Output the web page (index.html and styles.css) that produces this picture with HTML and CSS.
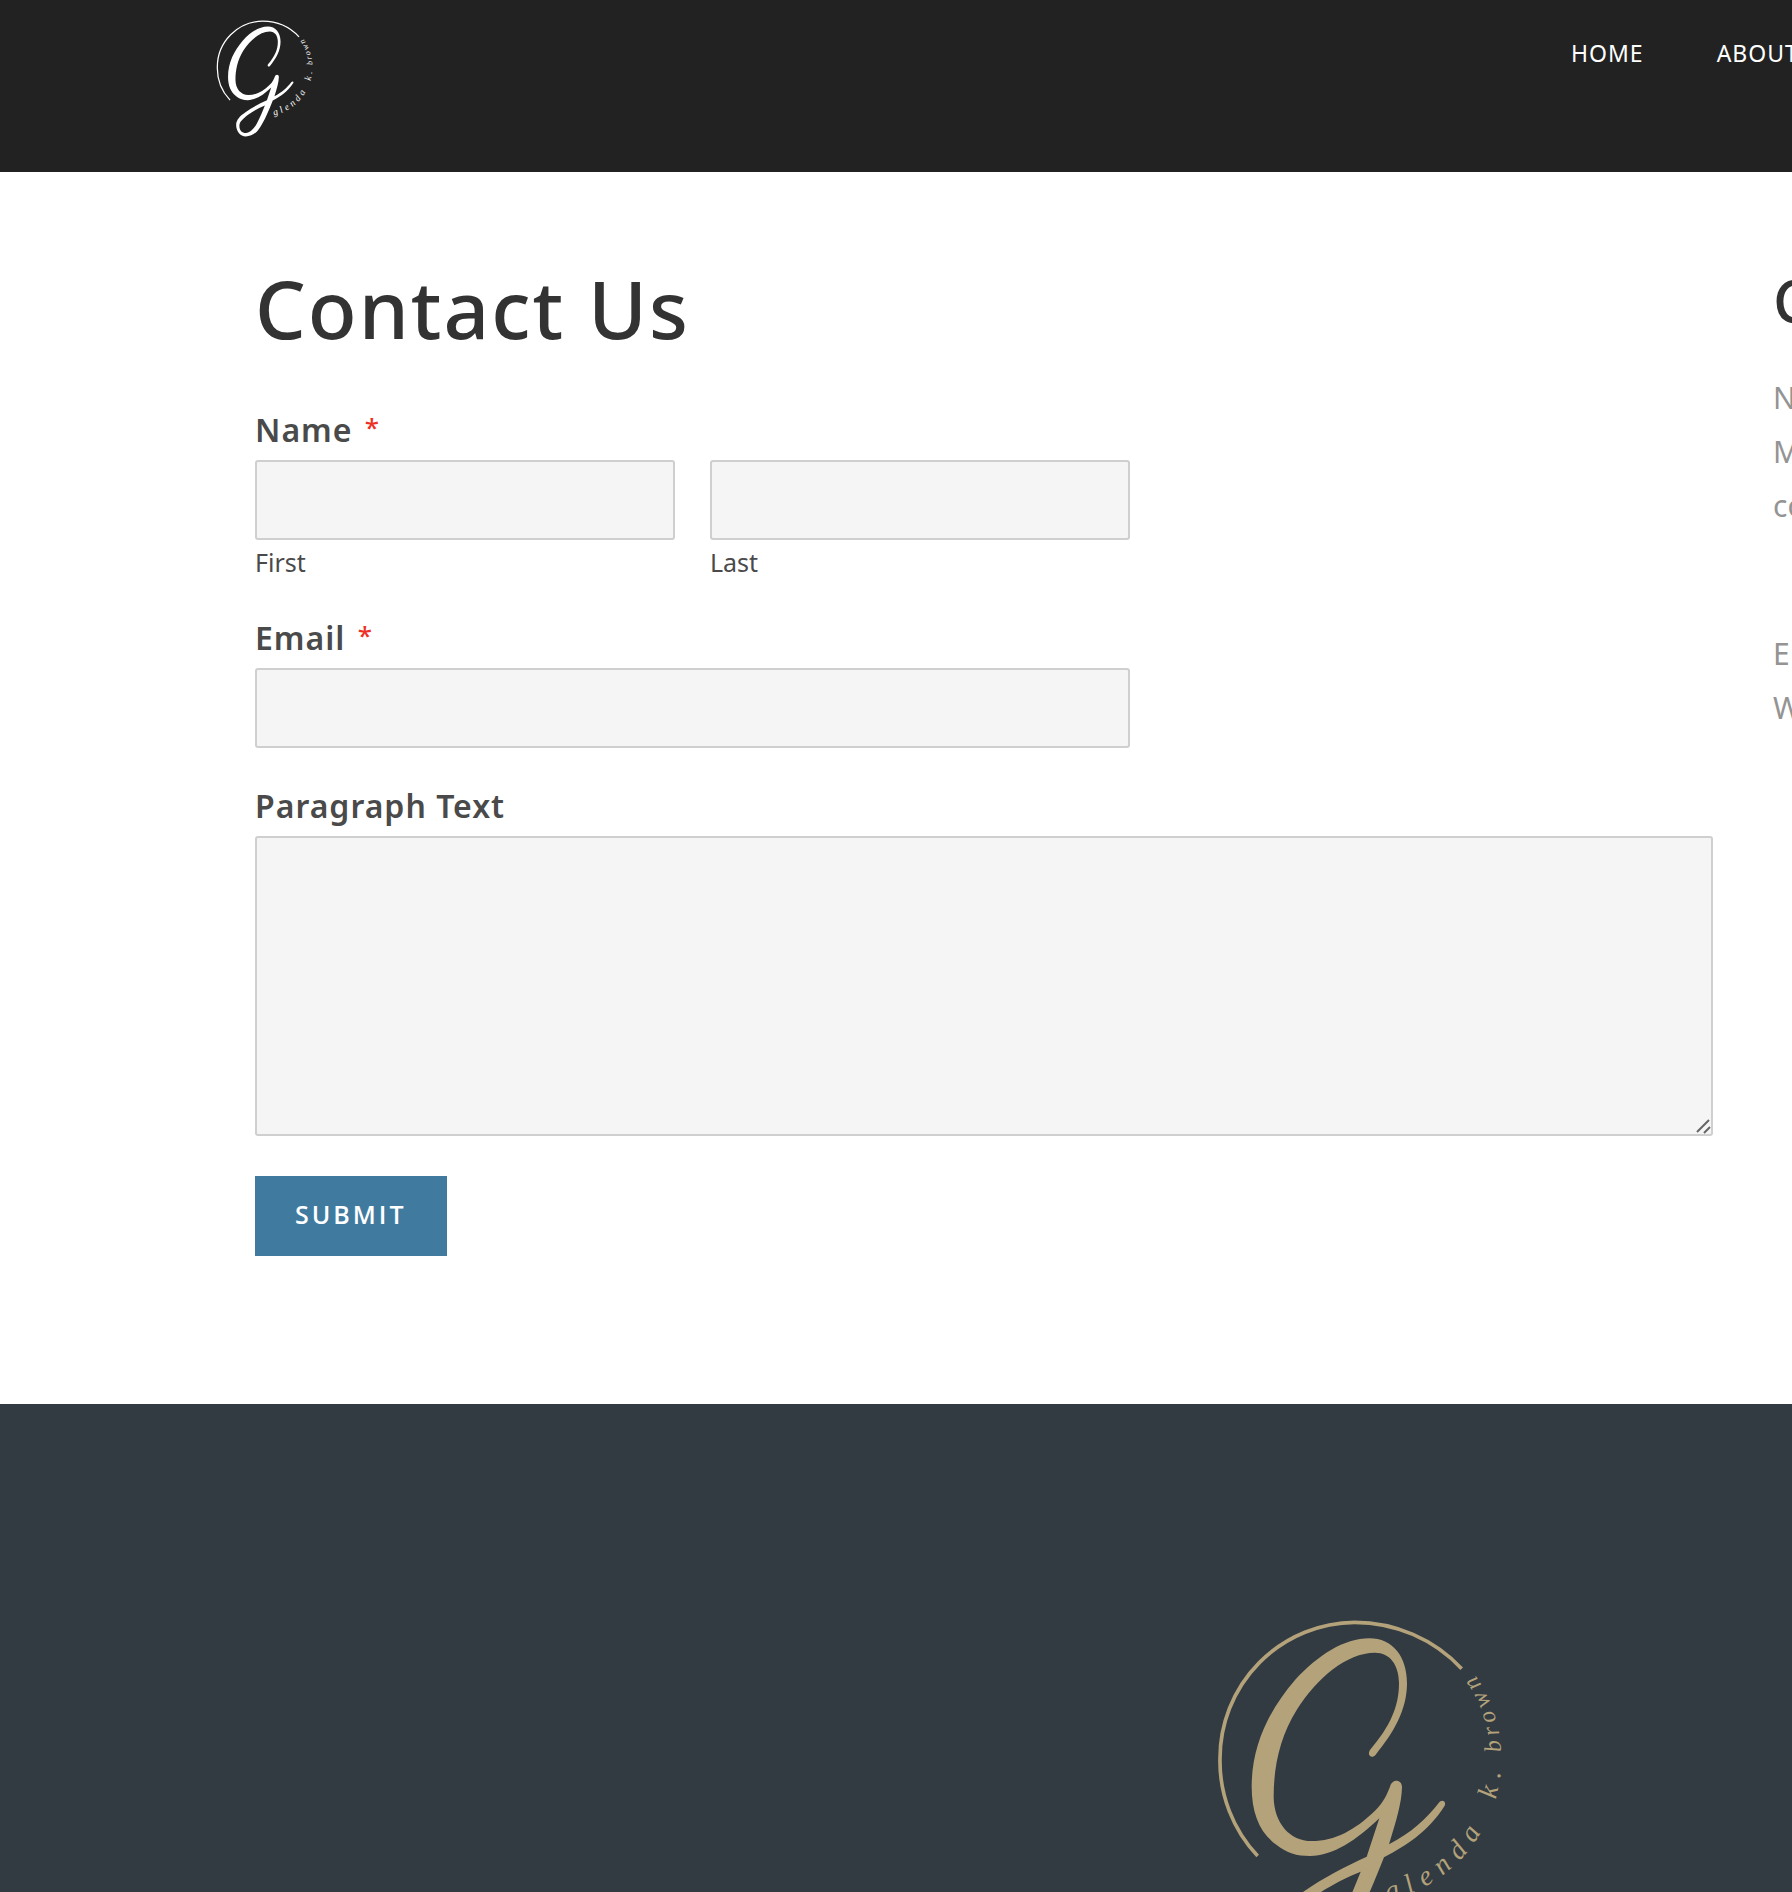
FILE: index.html
```html
<!DOCTYPE html>
<html lang="en">
<head>
<meta charset="utf-8">
<meta name="viewport" content="width=device-width, initial-scale=1">
<title>Contact Us</title>
<link rel="stylesheet" href="styles.css">
</head>
<body>
<svg class="defs" aria-hidden="true">
  <symbol id="logo" viewBox="48 48 870 1056" preserveAspectRatio="xMidYMin slice">
    <path class="logo-ring" d="M173 768A415 415 0 0 1 60 475A408 408 0 0 1 464 67A440 440 0 0 1 785 206"/>
    <path class="logo-mark" fill-rule="evenodd" d="M510 450C570 380 597 320 597 250C597 195 570 158 525 158C440 158 350 235 290 330C240 410 221 500 221 590C222 670 270 723 335 723C405 723 465 690 525 632C552 605 562 580 570 560C576 536 606 536 606 562C605 610 588 665 567 733C635 698 680 655 716 609C725 596 740 604 734 617C685 695 620 735 552 772C517 860 480 950 440 1008C405 1065 360 1090 313 1090C262 1088 227 1045 227 986C227 945 260 908 310 875C370 833 435 800 500 770L538 655C470 720 400 768 330 768C290 768 260 759 230 735C180 700 155 640 155 560C155 435 208 330 285 240C355 165 432 115 508 115C578 115 621 170 621 250C621 330 580 400 527 464C515 478 500 465 510 450ZM482 815C415 842 350 880 315 912C275 948 256 965 256 1000C256 1036 280 1060 313 1060C352 1060 387 1018 412 972C440 920 460 870 482 815Z"/>
    <path id="logo-arc" fill="none" d="M563 902A438 438 0 0 0 809 203"/>
    <text class="logo-name"><textPath href="#logo-arc" startOffset="0">glenda</textPath></text>
    <text class="logo-name"><textPath href="#logo-arc" startOffset="465">k.</textPath></text>
    <text class="logo-name logo-name-last"><textPath href="#logo-arc" startOffset="610">brown</textPath></text>
  </symbol>
</svg>

<header class="site-header">
  <a class="brand" href="#" aria-label="Glenda K. Brown"><svg class="logo logo-small"><use href="#logo"/></svg></a>
  <nav class="nav">
    <a href="#">HOME</a>
    <a href="#">ABOUT</a>
  </nav>
</header>

<main class="content">
  <section class="contact">
    <h1 class="title">Contact Us</h1>
    <form class="form">
      <fieldset class="field">
        <legend class="label">Name <span class="required">*</span></legend>
        <div class="names">
          <div class="name-part">
            <input class="control" id="first" type="text" required>
            <label class="sublabel" for="first">First</label>
          </div>
          <div class="name-part">
            <input class="control" id="last" type="text" required>
            <label class="sublabel" for="last">Last</label>
          </div>
        </div>
      </fieldset>
      <div class="field">
        <label class="label" for="email">Email <span class="required">*</span></label>
        <input class="control medium" id="email" type="email" required>
      </div>
      <div class="field">
        <label class="label" for="message">Paragraph Text</label>
        <textarea class="control message" id="message"></textarea>
      </div>
      <div class="actions"><button class="submit" type="submit">SUBMIT</button></div>
    </form>
  </section>
  <aside class="details">
    <h2 class="subtitle">C</h2>
    <p class="lines">N<br>M<br>co</p>
    <p class="lines lines-web">E<br>W</p>
  </aside>
</main>

<footer class="site-footer">
  <svg class="logo logo-large" role="img" aria-label="Glenda K. Brown"><use href="#logo"/></svg>
</footer>
</body>
</html>
```
FILE: styles.css
```css
* { box-sizing: border-box; }

body {
  margin: 0;
  min-height: 100vh;
  display: flex;
  flex-direction: column;
  overflow-x: hidden;
  background: #fff;
  color: #4a4a4a;
  font-family: "Noto Sans", "Open Sans", sans-serif;
}

.defs { position: absolute; width: 0; height: 0; }

/* Header */
.site-header {
  display: flex;
  justify-content: space-between;
  align-items: flex-start;
  padding: 19px 0 34px 216px;
  background: #222;
  color: #fff;
}
.brand { color: inherit; }
.nav {
  display: flex;
  gap: 73px;
  width: 221px;
  padding-top: 19px;
  overflow: hidden;
}
.nav a {
  color: #fff;
  font-size: 23px;
  line-height: 30px;
  letter-spacing: 1px;
  text-decoration: none;
  white-space: nowrap;
}

/* Logo */
.logo { display: block; fill: currentColor; }
.logo-small { width: 98px; height: 119px; }
.logo-large { width: 290px; height: 276px; }
.logo-ring { fill: none; stroke: currentColor; stroke-width: 11px; }
.logo-name {
  font-family: "Liberation Serif", serif;
  font-style: italic;
  font-size: 84px;
  letter-spacing: 26px;
}
.logo-name-last { font-size: 72px; letter-spacing: 16px; }

/* Contact area */
.content {
  display: grid;
  grid-template-columns: minmax(0, 1fr) 19px;
  gap: 60px;
  padding: 89px 0 148px 255px;
  overflow: hidden;
}
.title,
.subtitle {
  margin: 0;
  color: #333;
  font-weight: 500;
  letter-spacing: 2px;
}
.title { font-size: 80px; line-height: 94px; }
.subtitle { font-size: 60px; line-height: 78px; }

.form {
  display: flex;
  flex-direction: column;
  gap: 38px;
  margin-top: 55px;
}
.field {
  min-width: 0;
  margin: 0;
  padding: 0;
  border: 0;
}
.label {
  display: block;
  margin-bottom: 10px;
  padding: 0;
  font-size: 32px;
  line-height: 40px;
  font-weight: 600;
  letter-spacing: 1px;
}
.required {
  margin-left: 3px;
  color: #ee3124;
  font-size: 26px;
  font-weight: 500;
  line-height: 1;
  vertical-align: 5px;
}
.names {
  display: grid;
  grid-template-columns: 1fr 1fr;
  gap: 35px;
  width: 60%;
}
.control {
  display: block;
  width: 100%;
  height: 80px;
  padding: 0 20px;
  border: 2px solid #cfcfcf;
  border-radius: 3px;
  background: #f5f5f5;
  color: #4a4a4a;
  font: inherit;
  font-size: 30px;
}
.medium { width: 60%; }
.message { height: 300px; padding: 20px; resize: vertical; }
.message::-webkit-resizer {
  background: url("data:image/svg+xml,%3Csvg xmlns='http://www.w3.org/2000/svg' width='15' height='15'%3E%3Cpath d='M1 13L13 1M8 14L14 8' stroke='%23666' stroke-width='2'/%3E%3C/svg%3E") no-repeat;
}
.sublabel {
  display: block;
  margin-top: 7px;
  padding-bottom: 3px;
  font-size: 25px;
  line-height: 30px;
}
.actions { padding-top: 2px; }
.submit {
  display: block;
  height: 80px;
  padding: 0 40px 4px;
  border: 0;
  background: #407b9f;
  color: #fff;
  font-family: "Open Sans", sans-serif;
  font-size: 25px;
  font-weight: 600;
  letter-spacing: 3px;
}

.details { min-width: 0; white-space: nowrap; }
.lines {
  margin: 32px 0 0;
  color: #949494;
  font-size: 30px;
  line-height: 54px;
}
.lines-web { margin-top: 94px; }

/* Footer */
.site-footer {
  flex: 1;
  display: flex;
  justify-content: flex-end;
  align-items: flex-start;
  padding: 212px 286px 0 0;
  background: #323a42;
  color: #b3a27a;
}
```
